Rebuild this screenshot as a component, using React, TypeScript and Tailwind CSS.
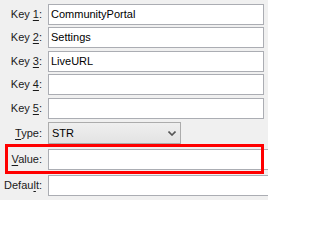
import React from "react";

const font = { fontFamily: '"Liberation Sans", Arial, sans-serif' };

function Label({ pre, key1, post }: { pre: string; key1: string; post: string }) {
  return (
    <div className="w-[42px] shrink-0 text-right whitespace-nowrap text-[11px] text-[#1a1a1a]">
      {pre}
      <span className="underline underline-offset-[2px]">{key1}</span>
      {post}
    </div>
  );
}

function Field({ value = "", wide = false }: { value?: string; wide?: boolean }) {
  return (
    <div
      className={`h-[21px] ${wide ? "w-[230px]" : "w-[216px]"} shrink-0 border border-[#abadb3] bg-white pl-[2px] flex items-center text-[11px] text-black`}
    >
      {value}
    </div>
  );
}

export default function App() {
  const keys = [
    { n: "1", v: "CommunityPortal", mt: "mt-[4px]" },
    { n: "2", v: "Settings", mt: "mt-[2px]" },
    { n: "3", v: "LiveURL", mt: "mt-[3px]" },
    { n: "4", v: "", mt: "mt-[2px]" },
    { n: "5", v: "", mt: "mt-[3px]" },
  ];

  return (
    <div className="w-[268px] h-[200px] overflow-hidden bg-[#f0f0f0] flex flex-col" style={font}>
      {keys.map((k) => (
        <div key={k.n} className={`flex items-center gap-[6px] ${k.mt}`}>
          <Label pre="Key " key1={k.n} post=":" />
          <Field value={k.v} />
        </div>
      ))}

      {/* Type */}
      <div className="flex items-center gap-[6px] mt-[3px]">
        <Label pre="" key1="T" post="ype:" />
        <div className="h-[22px] w-[133px] shrink-0 border border-[#acacac] bg-gradient-to-b from-[#efefef] to-[#e3e3e3] flex items-center justify-between pl-[3px] pr-[4px] text-[11px] text-black">
          <span>STR</span>
          <svg width="8" height="5" viewBox="0 0 8 5">
            <path d="M0.5 0.5 L4 4 L7.5 0.5" fill="none" stroke="#555" strokeWidth="1.6" />
          </svg>
        </div>
      </div>

      {/* Value, with highlight frame drawn over it */}
      <div className="relative flex items-center gap-[6px] mt-[5px]">
        <Label pre="" key1="V" post="alue:" />
        <Field wide />
        <span className="absolute top-[-5px] left-[5px] w-[259px] h-[30px] border-[3px] border-[#ff0000] pointer-events-none" />
      </div>

      {/* Default */}
      <div className="flex items-center gap-[6px] mt-[5px]">
        <Label pre="Defau" key1="l" post="t:" />
        <Field wide />
      </div>
    </div>
  );
}
